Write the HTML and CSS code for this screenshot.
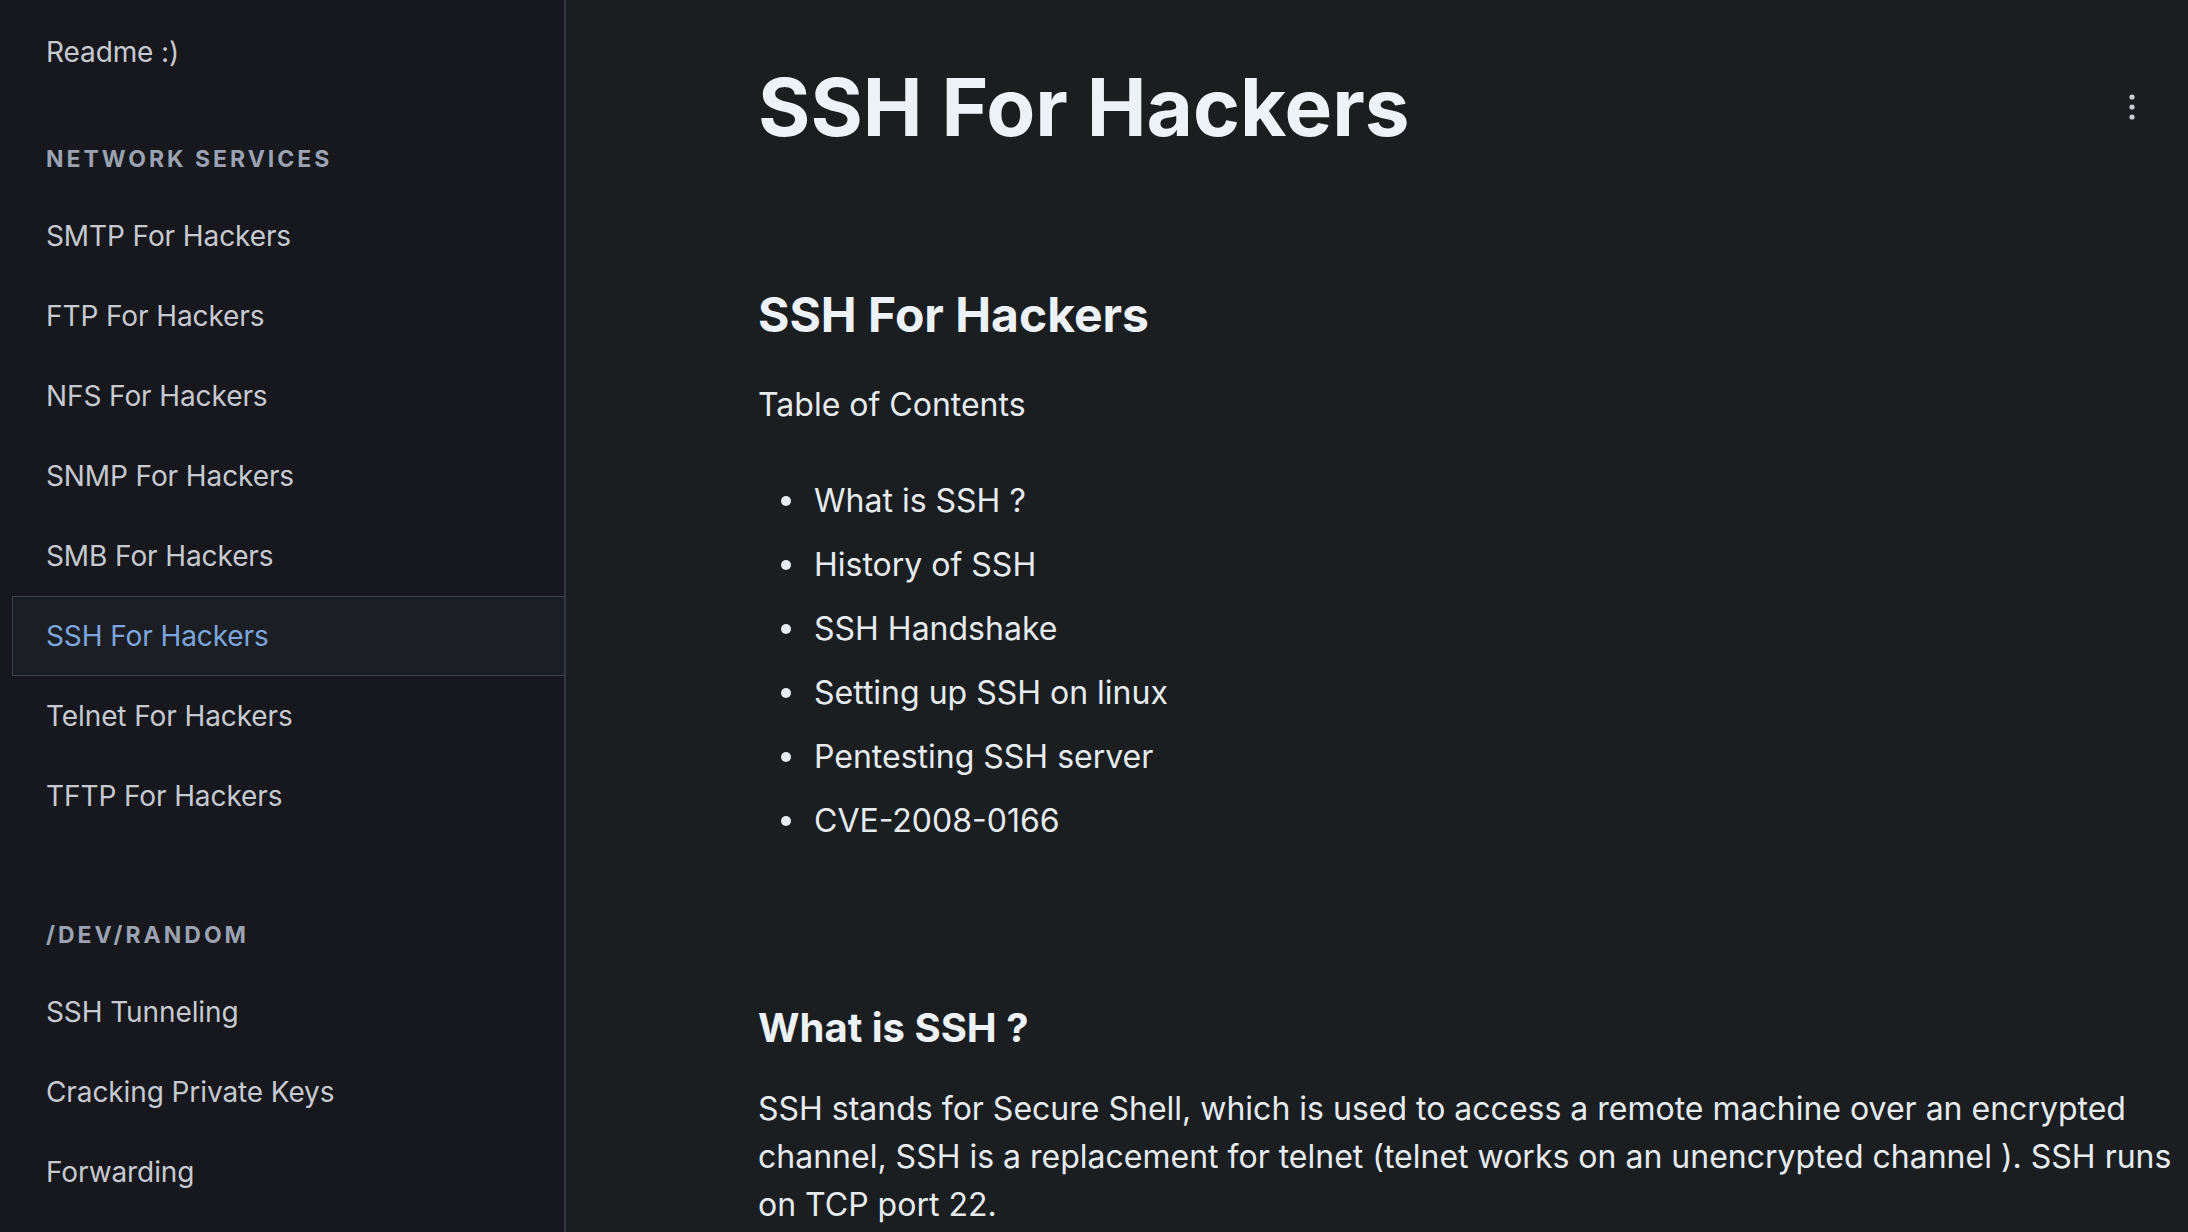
FILE: index.html
```html
<!DOCTYPE html>
<html lang="en">
<head>
<meta charset="utf-8">
<title>SSH For Hackers</title>
<link rel="stylesheet" href="styles.css">
</head>
<body>
<div class="layout">
  <aside class="sidebar">
    <nav class="nav">
      <a class="nav-item" href="#">Readme :)</a>
      <div class="nav-group">
        <div class="group-title">Network Services</div>
        <a class="nav-item" href="#">SMTP For Hackers</a>
        <a class="nav-item" href="#">FTP For Hackers</a>
        <a class="nav-item" href="#">NFS For Hackers</a>
        <a class="nav-item" href="#">SNMP For Hackers</a>
        <a class="nav-item" href="#">SMB For Hackers</a>
        <a class="nav-item active" href="#">SSH For Hackers</a>
        <a class="nav-item" href="#">Telnet For Hackers</a>
        <a class="nav-item" href="#">TFTP For Hackers</a>
      </div>
      <div class="nav-group second">
        <div class="group-title">/dev/random</div>
        <a class="nav-item" href="#">SSH Tunneling</a>
        <a class="nav-item" href="#">Cracking Private Keys</a>
        <a class="nav-item" href="#">Forwarding</a>
      </div>
    </nav>
  </aside>
  <main class="main">
    <div class="content">
      <header class="page-header">
        <h1 class="page-title">SSH For Hackers</h1>
        <button class="kebab" aria-label="More">
          <svg width="6" height="26" viewBox="0 0 6 26"><circle cx="3" cy="3" r="2.6" fill="#c9cdd3"/><circle cx="3" cy="13" r="2.6" fill="#c9cdd3"/><circle cx="3" cy="23" r="2.6" fill="#c9cdd3"/></svg>
        </button>
      </header>
      <h2 class="h2">SSH For Hackers</h2>
      <p class="toc-label">Table of Contents</p>
      <ul class="toc">
        <li>What is SSH ?</li>
        <li>History of SSH</li>
        <li>SSH Handshake</li>
        <li>Setting up SSH on linux</li>
        <li>Pentesting SSH server</li>
        <li>CVE-2008-0166</li>
      </ul>
      <h3 class="h3">What is SSH ?</h3>
      <p class="para">SSH stands for Secure Shell, which is used to access a remote machine over an encrypted channel, SSH is a replacement for telnet (telnet works on an unencrypted channel ). SSH runs on TCP port 22.</p>
    </div>
  </main>
</div>
</body>
</html>
```
FILE: styles.css
```css
* { box-sizing: border-box; }
html, body { margin: 0; padding: 0; height: 100%; }
body {
  background: #1b1e21;
  font-family: Inter, "Noto Sans", sans-serif;
  color: #e6ebf0;
  overflow: hidden;
}
.layout {
  display: flex;
  height: 1232px;
}
.sidebar {
  width: 566px;
  flex: 0 0 566px;
  background: #16181d;
  border-right: 2px solid #323844;
  padding: 12px 0 0 12px;
}
.nav { display: flex; flex-direction: column; }
.nav-group { display: flex; flex-direction: column; }
.nav-item {
  display: block;
  height: 80px;
  line-height: 78px;
  padding-left: 33px;
  font-size: 28px;
  letter-spacing: -0.1px;
  color: #c6cad0;
  text-decoration: none;
  border: 1px solid transparent;
  border-right: none;
}
.nav-item.active {
  color: #7ea5de;
  background: #1b1e22;
  border-color: #3a4252;
}
.group-title {
  padding: 51px 0 21px 34px;
  line-height: 32px;
  font-size: 23px;
  font-weight: 700;
  letter-spacing: 3px;
  text-transform: uppercase;
  color: #9ba2b1;
}
.nav-group.second .group-title { padding-top: 83px; }
.main {
  flex: 1;
  min-width: 0;
  padding: 59px 16px 0 192px;
}
.content { display: flex; flex-direction: column; }
.page-header {
  display: flex;
  align-items: center;
  justify-content: space-between;
}
.page-title {
  margin: 0;
  font-size: 80px;
  line-height: 96px;
  font-weight: 700;
  color: #edf2f8;
}
.kebab {
  width: 80px;
  height: 60px;
  background: none;
  border: none;
  padding: 0;
  display: flex;
  align-items: center;
  justify-content: center;
}
.h2 {
  margin: 130px 0 0;
  font-size: 48px;
  line-height: 60px;
  font-weight: 700;
  color: #edf2f8;
}
.toc-label {
  margin: 36px 0 0;
  font-size: 32px;
  line-height: 48px;
  color: #e6ebf0;
}
.toc {
  list-style: none;
  margin: 48px 0 0;
  padding-left: 23px;
  font-size: 32px;
  line-height: 48px;
  color: #e6ebf0;
}
.toc li {
  display: flex;
  align-items: center;
  margin-bottom: 16px;
}
.toc li::before {
  content: "";
  flex: 0 0 10px;
  width: 10px;
  height: 10px;
  border-radius: 50%;
  background: #e6ebf0;
  margin-right: 23px;
}
.toc li:last-child { margin-bottom: 0; }
.h3 {
  margin: 158px 0 0;
  font-size: 40px;
  line-height: 50px;
  font-weight: 700;
  color: #edf2f8;
}
.para {
  margin: 32px 0 0;
  font-size: 32px;
  line-height: 48px;
  color: #e6ebf0;
}
```
